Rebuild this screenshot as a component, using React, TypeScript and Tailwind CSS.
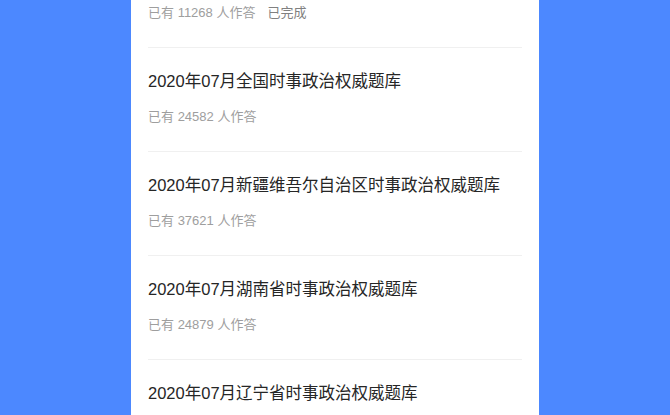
const items = [
  { title: '2020年07月全国时事政治权威题库', count: 11268, done: true },
  { title: '2020年07月全国时事政治权威题库', count: 24582 },
  { title: '2020年07月新疆维吾尔自治区时事政治权威题库', count: 37621 },
  { title: '2020年07月湖南省时事政治权威题库', count: 24879 },
  { title: '2020年07月辽宁省时事政治权威题库', count: 31546 },
];

export default function App() {
  return (
    <div
      className="flex h-[415px] w-[670px] justify-center overflow-hidden bg-[#4c88ff]"
      style={{ fontFamily: '"Liberation Sans", "Noto Sans CJK SC", sans-serif' }}
    >
      <div className="w-[408px] bg-white px-[17px]">
        <ul className="-mt-[56px]">
          {items.map((item, i) => (
            <li
              key={i}
              className="border-b border-[#f0f0f0] pt-[22px] pb-[25px]"
            >
              <p className="text-[16.5px] leading-[22px] text-[#262626]">
                {item.title}
              </p>
              <p className="mt-[16px] text-[13px] leading-[18px] text-[#9e9e9e]">
                已有 {item.count} 人作答
                {item.done && (
                  <span className="ml-[12px] text-[#808080]">已完成</span>
                )}
              </p>
            </li>
          ))}
        </ul>
      </div>
    </div>
  );
}
